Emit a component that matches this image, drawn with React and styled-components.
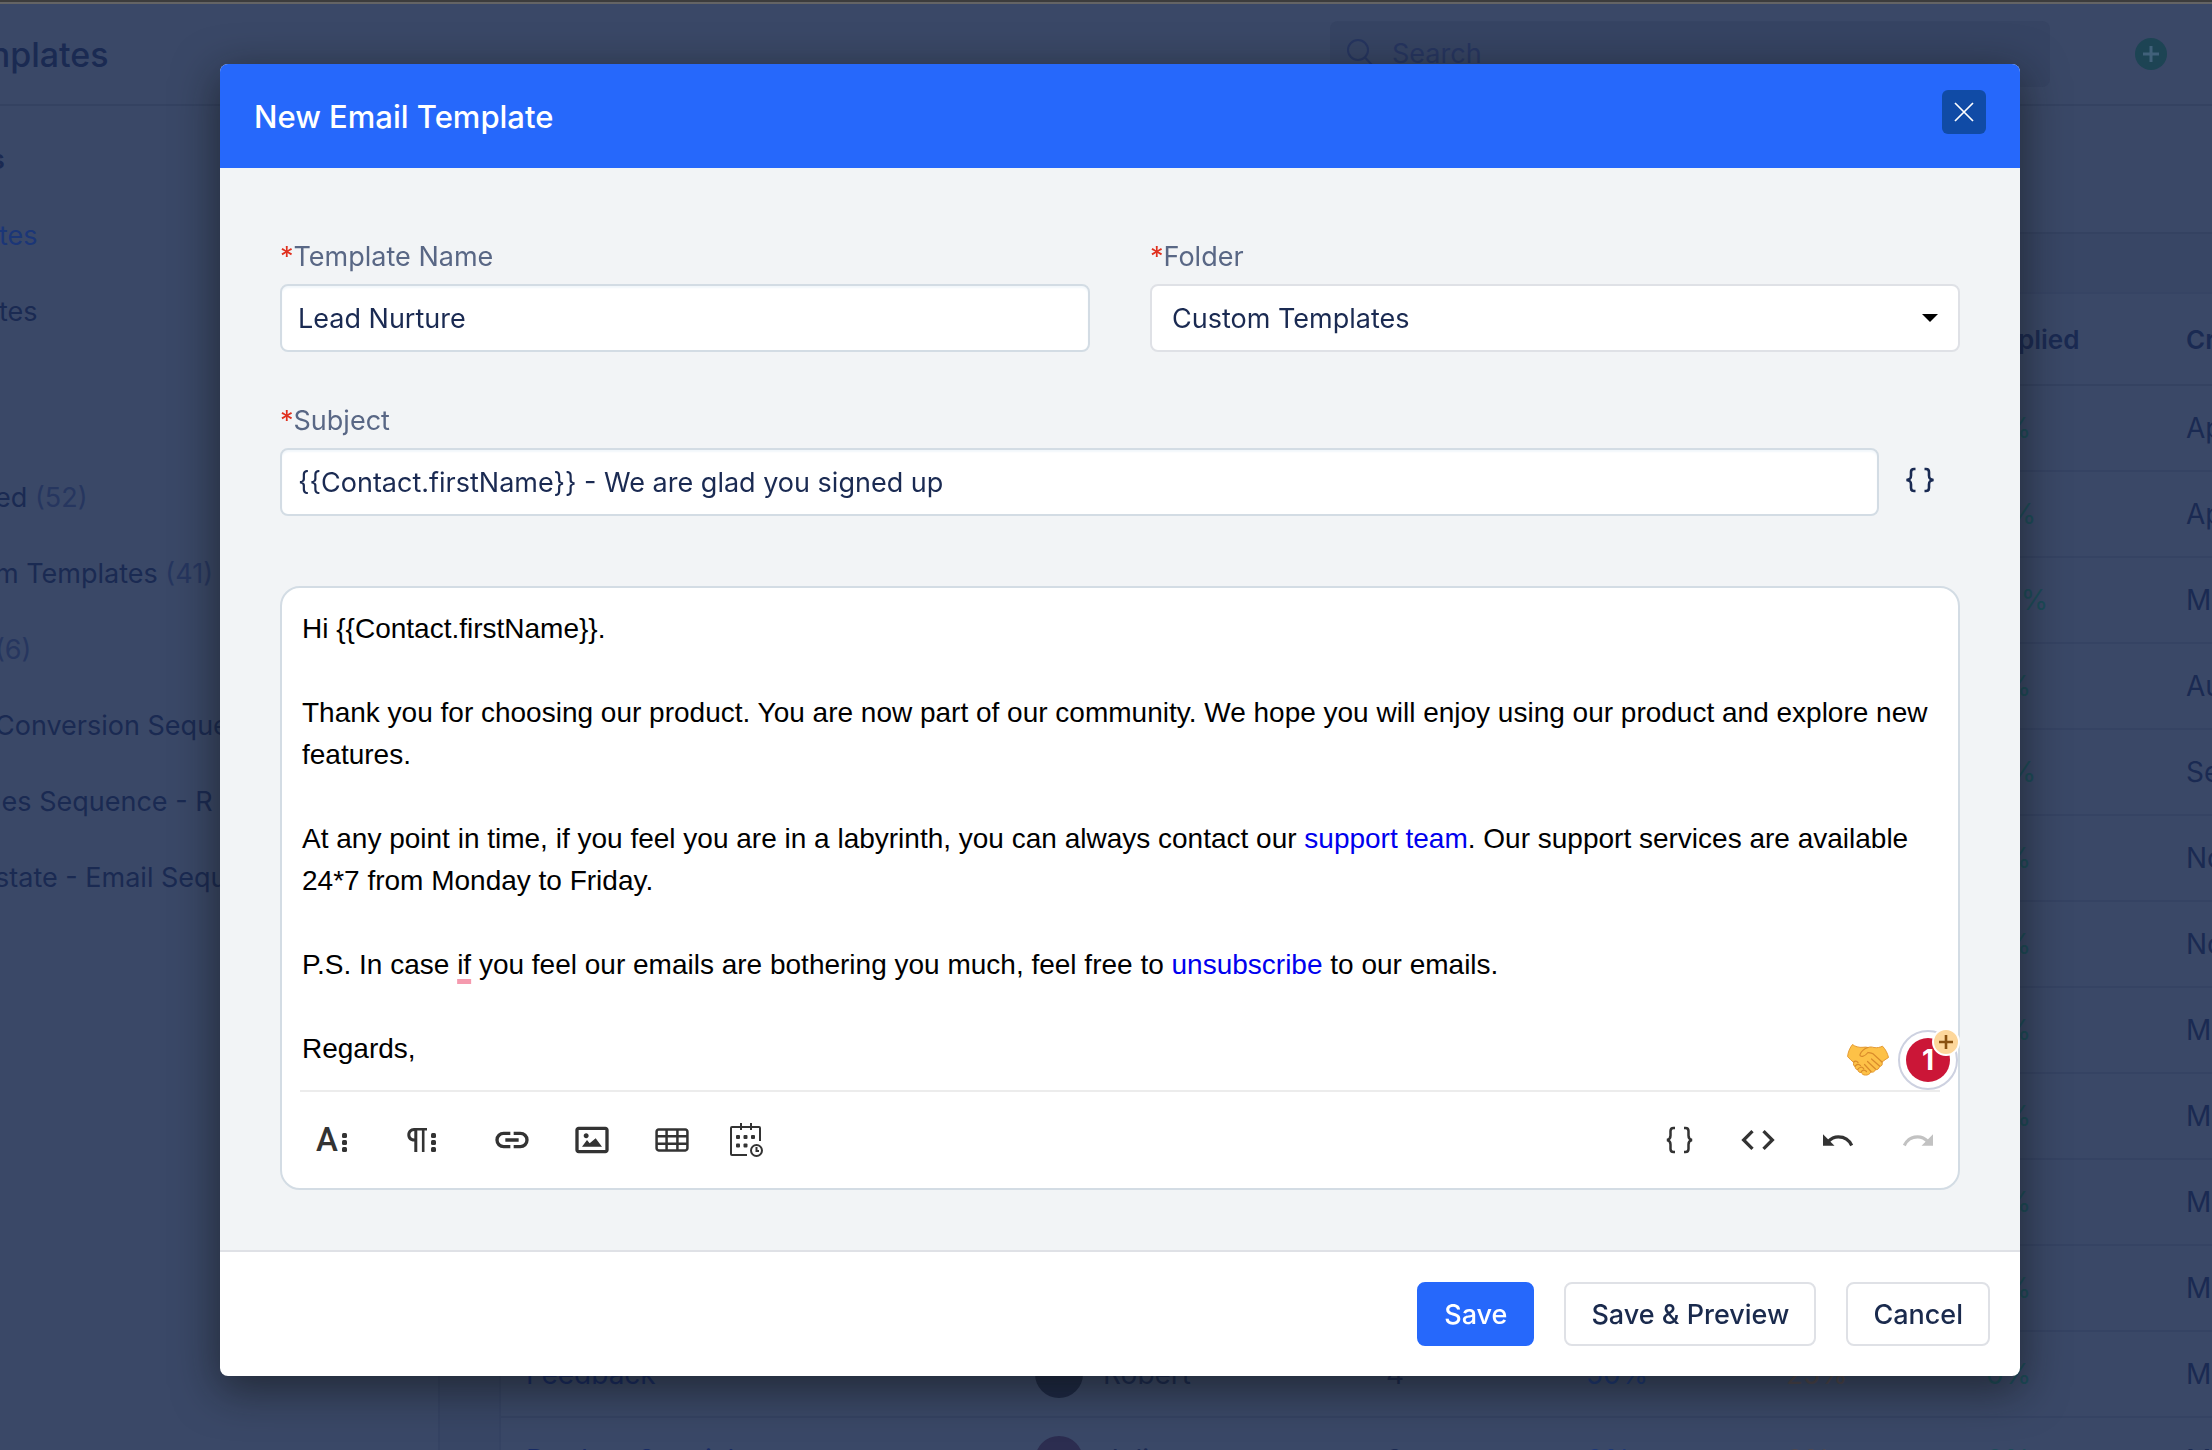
import React, { useState } from 'react';
import styled, { createGlobalStyle } from 'styled-components';

const folders = [
  { text: 'ed ', count: 52 },
  { text: 'm Templates ', count: 41 },
  { text: '', count: 6 },
  { text: 'Conversion Seque' },
  { text: 'les Sequence - R' },
  { text: 'state - Email Sequ' }
];

const rows = [
  { replied: '0%', created: 'Apr 12' },
  { replied: '11%', created: 'Apr 10' },
  { replied: '20%', created: 'Mar 28' },
  { replied: '0%', created: 'Aug 19' },
  { replied: '11%', created: 'Sep 7' },
  { replied: '0%', created: 'Nov 20' },
  { replied: '0%', created: 'Nov 18' },
  { replied: '0%', created: 'Mar 9' },
  { replied: '0%', created: 'Mar 9' },
  { replied: '0%', created: 'Mar 9' },
  { replied: '0%', created: 'Mar 9' },
  { name: 'Feedback', owner: 'Robert', sent: 4, opened: '50%', clicked: '25%', replied: '0%', created: 'Mar 9' },
  { name: 'Product Special', owner: 'Julie', sent: 3, opened: '0%', clicked: '0%', replied: '0%', created: 'Mar 9' }
];

const BracesIcon = () => (
  <svg width="40" height="40" viewBox="0 0 40 40" fill="none" stroke="currentColor" strokeWidth="2.500">
    <path d="M17 8h-1.500c-2.200 0-3 1-3 3v4.500c0 2.500-1 4-3.500 4.500 2.500.5 3.500 2 3.500 4.500V29c0 2 .8 3 3 3H17" />
    <path d="M26 8h1.500c2.200 0 3 1 3 3v4.500c0 2.500 1 4 3.500 4.500-2.500.5-3.500 2-3.500 4.500V29c0 2-.8 3-3 3H26" />
  </svg>
);

const ToolIcon = ({ d }) => (
  <svg width="40" height="40" viewBox="0 0 24 24" fill="currentColor">
    <path d={d} />
  </svg>
);

const Dots = () => (
  <svg width="6" height="24" viewBox="0 0 6 24" fill="currentColor">
    <rect y="5" width="5" height="5" rx="1.500" />
    <rect y="12" width="5" height="5" rx="1.500" />
    <rect y="19" width="5" height="5" rx="1.500" />
  </svg>
);

const ParagraphIcon = () => (
  <svg width="20" height="24" viewBox="0 0 20 24" fill="currentColor">
    <path d="M7 0h13v2.600h-2.500V24h-2.600V2.600H10.300V24H7.300V13.500C3 13.500.3 10.600.3 6.900.3 3 3.200 0 7 0Z M7.300 3C5 3 3.300 4.600 3.300 6.800s1.700 3.800 4 3.800Z" fillRule="evenodd" />
  </svg>
);

const CalendarIcon = () => (
  <svg width="34" height="34" viewBox="0 0 34 34" fill="none" stroke="currentColor" strokeWidth="2">
    <path d="M31 18V5a1 1 0 0 0-1-1H3a1 1 0 0 0-1 1v26a1 1 0 0 0 1 1h15" />
    <path d="M12 0v7M22 0v7" />
    <circle cx="27.500" cy="27.500" r="5.500" />
    <path d="M27.500 24v4H30" />
    <g fill="currentColor" stroke="none">
      <rect x="7" y="12" width="4" height="4" rx="1" />
      <rect x="14.500" y="12" width="4" height="4" rx="1" />
      <rect x="22" y="12" width="4" height="4" rx="1" />
      <rect x="7" y="20.500" width="4" height="4" rx="1" />
      <rect x="14.500" y="20.500" width="4" height="4" rx="1" />
    </g>
  </svg>
);

const UndoIcon = ({ flip }) => (
  <svg width="40" height="40" viewBox="0 0 24 24">
    <g transform={flip ? 'matrix(-1 0 0 1 24 0)' : undefined}>
      <path d="M3 8.600v6.900h6.900z" fill="currentColor" />
      <path d="M6 13c1.800-1.900 3.800-2.900 6.200-2.900 3.600 0 6.600 2 8 5.200" fill="none" stroke="currentColor" strokeWidth="1.900" />
    </g>
  </svg>
);

const HandshakeIcon = () => (
  <svg width="42" height="32" viewBox="0 0 42 32">
    <path
      d="M5.500.5C8 2.500 12 3.800 16 3.300c2-.3 3.500-.3 5 .2 2-.8 4-.5 6 0 3 .7 6-.2 8.500-1.300 3 3 5 7 6 11.300-2.500 1.500-4.500 3-6.500 4.500 1 2.500-.5 4.500-2.500 4.500-.3 2-1.800 3.500-4 3.200-.8 2-2.600 2.900-4.500 2.300-1 2-3.500 3.300-5.500 3.100-2.200 0-3.600-1-4-2.600-2 .3-3.500-.8-3.500-2.700-2-.1-3-1.500-2.700-3.300-1.800-.6-2.300-2.200-1.500-3.800C4.500 16.200 2 14.500.6 12.500 1 8 3 3.500 5.500.5Z"
      fill="#fdc147"
      stroke="#e59a32"
    />
    <path
      d="M21 3.500c-3.500 1-6.500 3.500-8 7-.3 1.500 1 2.200 2.700 1.800 2.300-.6 3.800-1.800 5.300-3.800 2 .2 3.500.2 5 1.200l9 8.300M24.500 15l8 7M20.500 17.500l8 7.500M17.500 20.500l6.500 7M6.500 18.200c1.500-1.400 3-1.400 4.500.3M8 22.300c2-2.300 4-2.500 5.500-.6M10.700 25.500c2-2.800 4.500-3 6-.8M14 28.300c1.300-2.400 3.500-3 5.500-.8"
      fill="none"
      stroke="#d98b2b"
      strokeWidth="1.200"
      strokeLinecap="round"
    />
  </svg>
);

const SearchIcon = () => (
  <svg width="28" height="28" viewBox="0 0 28 28" fill="none" stroke="currentColor" strokeWidth="2">
    <circle cx="12" cy="11" r="10" />
    <path d="M19 18.500L26 26" />
  </svg>
);

const App = () => {
  const [name, setName] = useState('Lead Nurture');
  const [subject, setSubject] = useState('{{Contact.firstName}} - We are glad you signed up');

  return (
    <Page>
      <GlobalStyle />
      <BrowserEdge />
      <TopBar>
        <PageTitle>mplates</PageTitle>
        <SearchBox>
          <SearchIcon />
          <SearchInput type="search" placeholder="Search" aria-label="Search" />
        </SearchBox>
        <AddButton aria-label="Add">
          <svg width="16" height="16" viewBox="0 0 16 16" stroke="currentColor" strokeWidth="3">
            <path d="M8 0v16M0 8h16" />
          </svg>
        </AddButton>
      </TopBar>
      <Main>
        <Sidebar>
          <SideItem $bold>s</SideItem>
          <SideItem $active>tes</SideItem>
          <SideItem>tes</SideItem>
          <FolderList>
            {folders.map((folder) => (
              <SideItem key={folder.text}>
                {folder.text}
                {folder.count && <Count>({folder.count})</Count>}
              </SideItem>
            ))}
          </FolderList>
        </Sidebar>
        <Content>
          <ContentHead />
          <Card>
            <CardTools />
            <Table>
              <thead>
                <tr>
                  <Th $width={509} />
                  <Th $width={351} />
                  <Th $width={200} />
                  <Th $width={200} />
                  <Th $width={200} />
                  <Th $width={200}>Replied</Th>
                  <Th $width={200}>Created</Th>
                </tr>
              </thead>
              <tbody>
                {rows.map((row, index) => (
                  <tr key={index}>
                    <Td $color="#162a64">{row.name}</Td>
                    <Td>
                      {row.owner && (
                        <Owner>
                          <Avatar $color={row.owner === 'Julie' ? '#2c2d50' : '#1c2845'} />
                          {row.owner}
                        </Owner>
                      )}
                    </Td>
                    <Td>{row.sent}</Td>
                    <Td $color="#1c3878">{row.opened}</Td>
                    <Td $color="#4e4850">{row.clicked}</Td>
                    <Td $color="#1c4c5a">{row.replied}</Td>
                    <Td>{row.created}</Td>
                  </tr>
                ))}
              </tbody>
            </Table>
          </Card>
        </Content>
      </Main>

      <Backdrop>
        <Modal role="dialog" aria-labelledby="modal-title">
          <ModalHeader>
            <ModalTitle id="modal-title">New Email Template</ModalTitle>
            <CloseButton aria-label="Close">
              <svg width="20" height="20" viewBox="0 0 20 20" stroke="currentColor" strokeWidth="1.700">
                <path d="M1 1l18 18M19 1L1 19" />
              </svg>
            </CloseButton>
          </ModalHeader>
          <ModalBody>
            <FieldRow>
              <Field>
                <Label htmlFor="name">
                  <Star>*</Star>Template Name
                </Label>
                <Input id="name" value={name} onChange={(e) => setName(e.target.value)} />
              </Field>
              <Field>
                <Label htmlFor="folder">
                  <Star>*</Star>Folder
                </Label>
                <SelectWrap>
                  <Select id="folder" defaultValue="custom">
                    <option value="custom">Custom Templates</option>
                  </Select>
                  <Caret />
                </SelectWrap>
              </Field>
            </FieldRow>
            <Field>
              <Label htmlFor="subject">
                <Star>*</Star>Subject
              </Label>
              <SubjectRow>
                <Input id="subject" value={subject} onChange={(e) => setSubject(e.target.value)} />
                <VariableButton aria-label="Insert variable">
                  <svg width="30" height="26" viewBox="0 0 30 26" fill="none" stroke="currentColor" strokeWidth="2.600">
                    <path d="M10.500 2H9C7 2 6 3 6 5v3.500c0 3-1 4-4.500 4.500C5 13.500 6 14.500 6 17.500V21c0 2 1 3 3 3h1.500" />
                    <path d="M19.500 2H21c2 0 3 1 3 3v3.500c0 3 1 4 4.500 4.500-3.500.5-4.500 1.500-4.500 4.500V21c0 2-1 3-3 3h-1.500" />
                  </svg>
                </VariableButton>
              </SubjectRow>
            </Field>
            <Editor>
              <EditorText role="textbox" aria-label="Email body" contentEditable suppressContentEditableWarning>
                <p>Hi {'{{Contact.firstName}}'}.</p>
                <p>
                  Thank you for choosing our product. You are now part of our community. We hope you will enjoy using our
                  product and explore new features.
                </p>
                <p>
                  At any point in time, if you feel you are in a labyrinth, you can always contact our{' '}
                  <a href="#support">support team</a>. Our support services are available 24*7 from Monday to Friday.
                </p>
                <p>
                  P.S. In case <Flagged>if</Flagged> you feel our emails are bothering you much, feel free to{' '}
                  <a href="#unsubscribe">unsubscribe</a> to our emails.
                </p>
                <p>Regards,</p>
              </EditorText>
              <Toolbar>
                <Tool $menu aria-label="Text format">
                  <LetterA>A</LetterA>
                  <Dots />
                </Tool>
                <Tool $menu aria-label="Paragraph format">
                  <ParagraphIcon />
                  <Dots />
                </Tool>
                <Tool aria-label="Insert link">
                  <ToolIcon d="M11,17H7A5,5,0,0,1,7,7h4V9H7a3,3,0,0,0,0,6h4ZM17,7H13V9h4a3,3,0,0,1,0,6H13v2h4A5,5,0,0,0,17,7Zm-1,4H8v2h8Z" />
                </Tool>
                <Tool aria-label="Insert image">
                  <ToolIcon d="M14.2,11l3.8,5H6l3-4l1.6,2L14.2,11z M8.5,11c0.8,0,1.5-0.7,1.5-1.5S9.3,8,8.5,8S7,8.7,7,9.5C7,10.3,7.7,11,8.5,11z M22,6v12c0,1.1-0.9,2-2,2H4c-1.1,0-2-0.9-2-2V6c0-1.1,0.9-2,2-2h16C21.1,4,22,4.9,22,6z M20,8.8V6H4v12h16V8.8z" />
                </Tool>
                <Tool aria-label="Insert table">
                  <ToolIcon d="M20,5H4C2.9,5,2,5.9,2,7v2v1.5v3V15v2c0,1.1,0.9,2,2,2h16c1.1,0,2-0.9,2-2v-2v-1.5v-3V9V7C22,5.9,21.1,5,20,5z M9.5,13.5v-3h5v3H9.5z M14.5,15v2.5h-5V15H14.5z M9.5,9V6.5h5V9H9.5z M3.5,7c0-0.3,0.2-0.5,0.5-0.5h4V9H3.5V7z M3.5,10.5H8v3H3.5V10.5z M3.5,17v-2H8v2.5H4C3.7,17.5,3.5,17.3,3.5,17z M20.5,17c0,0.3-0.2,0.5-0.5,0.5h-4V15h4.5V17z M20.5,13.5H16v-3h4.5V13.5z M16,9V6.5h4c0.3,0,0.5,0.2,0.5,0.5v2H16z" />
                </Tool>
                <Tool $compact aria-label="Insert meeting">
                  <CalendarIcon />
                </Tool>
                <Spacer />
                <Tool aria-label="Insert variable">
                  <BracesIcon />
                </Tool>
                <Tool aria-label="Code view">
                  <ToolIcon d="M9.4,16.6,4.8,12,9.4,7.4,8,6,2,12l6,6Zm5.2,0L19.2,12,14.6,7.4,16,6l6,6-6,6Z" />
                </Tool>
                <Tool aria-label="Undo">
                  <UndoIcon />
                </Tool>
                <Tool disabled aria-label="Redo">
                  <UndoIcon flip />
                </Tool>
              </Toolbar>
              <Checker>
                <HandshakeIcon />
                <CheckerRing aria-label="1 suggestion">
                  <CheckerCount>1</CheckerCount>
                  <CheckerPlus>
                    <svg width="14" height="14" viewBox="0 0 14 14" stroke="#8a5210" strokeWidth="2.600">
                      <path d="M7 0v14M0 7h14" />
                    </svg>
                  </CheckerPlus>
                </CheckerRing>
              </Checker>
            </Editor>
          </ModalBody>
          <ModalFooter>
            <Button $primary>Save</Button>
            <Button>Save &amp; Preview</Button>
            <Button>Cancel</Button>
          </ModalFooter>
        </Modal>
      </Backdrop>
    </Page>
  );
};

const GlobalStyle = createGlobalStyle`
  * {
    box-sizing: border-box;
  }
  body {
    margin: 0;
    font-family: Inter, 'Liberation Sans', sans-serif;
    font-size: 27px;
    color: #1a2a52;
  }
  button, input, select {
    font: inherit;
    color: inherit;
  }
  button {
    cursor: pointer;
  }
  svg {
    display: block;
    flex: none;
  }
`;

const Page = styled.div`
  height: 100vh;
  overflow: hidden;
  background: #3a4867;
`;

const BrowserEdge = styled.div`
  height: 4px;
  background: #3c3c3c;
  border-bottom: 2px solid #646464;
`;

const TopBar = styled.header`
  display: flex;
  align-items: center;
  height: 102px;
  padding-right: 45px;
  border-bottom: 2px solid #344261;
`;

const PageTitle = styled.h1`
  margin: 0 auto 0 -20px;
  font-size: 34px;
  font-weight: 500;
`;

const SearchBox = styled.div`
  display: flex;
  align-items: center;
  gap: 16px;
  width: 720px;
  height: 66px;
  padding: 0 16px 2px;
  border-radius: 8px;
  background: #364463;
  color: #263560;
`;

const SearchInput = styled.input`
  flex: 1;
  border: none;
  background: none;

  &::placeholder {
    color: #263560;
    opacity: 1;
  }
`;

const AddButton = styled.button`
  display: flex;
  align-items: center;
  justify-content: center;
  width: 32px;
  height: 32px;
  margin-left: 85px;
  padding: 0;
  border: none;
  border-radius: 50%;
  background: #1d4454;
  color: #41617a;
`;

const Main = styled.div`
  display: flex;
`;

const Sidebar = styled.nav`
  flex: none;
  width: 440px;
  height: 100vh;
  padding-top: 16px;
  border-right: 2px solid #354363;
`;

const SideItem = styled.div`
  height: 76px;
  margin-left: ${({ $bold }) => ($bold ? '-10px' : '-1px')};
  line-height: 76px;
  white-space: pre;
  font-weight: ${({ $bold }) => ($bold ? 600 : 400)};
  color: ${({ $active }) => ($active ? '#1b3677' : '#1a2a52')};
`;

const FolderList = styled.div`
  margin: 110px 0 0 -4px;
`;

const Count = styled.span`
  color: #26365f;
`;

const Content = styled.main`
  flex: 1;
  min-width: 0;
  padding-left: 59px;
  background: #384665;
`;

const ContentHead = styled.div`
  height: 126px;
  margin-left: -59px;
  background: #3a4867;
`;

const Card = styled.section`
  border-top: 2px solid #344261;
  border-left: 2px solid #354363;
`;

const CardTools = styled.div`
  height: 60px;
  border-bottom: 2px solid #364464;
  background: #384665;
`;

const Table = styled.table`
  table-layout: fixed;
  width: 1860px;
  border-collapse: collapse;
  background: #3a4867;
`;

const Th = styled.th`
  width: ${({ $width }) => $width}px;
  height: 91px;
  padding: 0 0 0 25px;
  border-bottom: 2px solid #344261;
  text-align: left;
  font-size: 26px;
  font-weight: 600;
`;

const Td = styled.td`
  height: 86px;
  padding: 0 0 0 25px;
  border-bottom: 2px solid #354363;
  font-size: 28px;
  color: ${({ $color }) => $color || '#1a2a52'};
`;

const Owner = styled.div`
  display: flex;
  align-items: center;
  gap: 20px;
`;

const Avatar = styled.span`
  width: 48px;
  height: 48px;
  border-radius: 50%;
  background: ${({ $color }) => $color};
`;

const Backdrop = styled.div`
  position: fixed;
  inset: 0;
  display: flex;
  align-items: flex-start;
  padding: 64px 192px 0 220px;
`;

const Modal = styled.div`
  flex: 1;
  min-width: 0;
  overflow: hidden;
  border-radius: 8px;
  background: #fff;
  box-shadow: 0 12px 44px 2px rgba(14, 16, 14, 0.55);
`;

const ModalHeader = styled.div`
  display: flex;
  justify-content: space-between;
  height: 104px;
  padding: 26px 34px 0;
  background: #2668fb;
  color: #fff;
`;

const ModalTitle = styled.h2`
  margin: 0;
  font-size: 31px;
  font-weight: 500;
  line-height: 54px;
`;

const CloseButton = styled.button`
  display: flex;
  align-items: center;
  justify-content: center;
  width: 44px;
  height: 44px;
  padding: 0;
  border: none;
  border-radius: 6px;
  background: #104ba6;
`;

const ModalBody = styled.div`
  padding: 68px 60px 60px;
  background: #f2f4f6;
`;

const FieldRow = styled.div`
  display: flex;
  gap: 60px;
  margin-bottom: 48px;
`;

const Field = styled.div`
  flex: 1;
  min-width: 0;
`;

const Label = styled.label`
  display: block;
  margin-bottom: 6px;
  line-height: 42px;
  color: #596785;
`;

const Star = styled.span`
  color: #e0301e;
`;

const Input = styled.input`
  display: block;
  width: 100%;
  height: 68px;
  padding: 0 16px;
  border: 2px solid #d3dce4;
  border-radius: 8px;
  background: #fff;
  box-shadow: inset 0 2px 2px #f2f7fb;
`;

const SelectWrap = styled.div`
  position: relative;
`;

const Select = styled.select`
  appearance: none;
  display: block;
  width: 100%;
  height: 68px;
  padding: 0 60px 0 20px;
  border: 2px solid #dfe1e6;
  border-radius: 8px;
  background: #fff;
`;

const Caret = styled.span`
  position: absolute;
  top: 30px;
  right: 22px;
  border: 8px solid transparent;
  border-top-color: #000;
  border-bottom: none;
  pointer-events: none;
`;

const SubjectRow = styled.div`
  display: flex;
  align-items: center;
`;

const VariableButton = styled.button`
  display: flex;
  flex: none;
  align-items: center;
  justify-content: center;
  width: 81px;
  height: 68px;
  padding: 0 0 4px;
  border: none;
  background: none;
`;

const Editor = styled.div`
  position: relative;
  margin-top: 70px;
  border: 2px solid #d3dce4;
  border-radius: 20px;
  background: #fff;
`;

const EditorText = styled.div`
  margin: 0 18px;
  padding: 20px 2px;
  border-bottom: 2px solid #ececec;
  font-family: 'Liberation Sans', Arial, sans-serif;
  font-size: 28px;
  line-height: 42px;
  color: #000;
  outline: none;

  p {
    margin: 0 0 42px;
  }

  p:last-child {
    margin: 0;
  }

  a {
    color: #0000ee;
    text-decoration: none;
  }
`;

const Flagged = styled.span`
  text-decoration: underline 5px #f59aae;
  text-underline-offset: 5px;
`;

const Toolbar = styled.div`
  display: flex;
  align-items: center;
  height: 96px;
  padding-left: 10px;
`;

const Tool = styled.button`
  display: flex;
  align-items: center;
  justify-content: center;
  gap: 4px;
  width: ${({ $compact }) => ($compact ? 68 : 80)}px;
  height: 60px;
  margin-right: ${({ $menu }) => ($menu ? 10 : 0)}px;
  padding: 0;
  border: none;
  background: none;
  color: #333;

  &:disabled {
    color: #c2c2c2;
  }
`;

const LetterA = styled.span`
  font-family: Roboto, sans-serif;
  font-size: 33px;
  font-weight: 500;
  line-height: 34px;
`;

const Spacer = styled.div`
  flex: 1;
`;

const Checker = styled.div`
  position: absolute;
  right: 0;
  bottom: 98px;
  display: flex;
  align-items: center;
  gap: 9px;
`;

const CheckerRing = styled.button`
  position: relative;
  display: flex;
  align-items: center;
  justify-content: center;
  width: 60px;
  height: 60px;
  padding: 0;
  border: 2px solid #cdd1e0;
  border-radius: 50%;
  background: #fff;
`;

const CheckerCount = styled.span`
  width: 44px;
  border-radius: 50%;
  background: #cb1637;
  color: #fff;
  font-size: 28px;
  font-weight: 700;
  line-height: 44px;
`;

const CheckerPlus = styled.span`
  position: absolute;
  top: -4px;
  right: -4px;
  display: flex;
  align-items: center;
  justify-content: center;
  width: 28px;
  height: 28px;
  border: 2px solid #fff;
  border-radius: 50%;
  background: #fdd79b;
`;

const ModalFooter = styled.div`
  display: flex;
  justify-content: flex-end;
  gap: 30px;
  padding: 30px;
  border-top: 2px solid #dfe1e6;
`;

const Button = styled.button`
  height: 64px;
  padding: 0 25px;
  border: 2px solid ${({ $primary }) => ($primary ? '#2668fb' : '#dfe1e6')};
  border-radius: 8px;
  background: ${({ $primary }) => ($primary ? '#2668fb' : '#fff')};
  color: ${({ $primary }) => ($primary ? '#fff' : '#1a2a4d')};
  font-weight: 500;
`;

export default App;
